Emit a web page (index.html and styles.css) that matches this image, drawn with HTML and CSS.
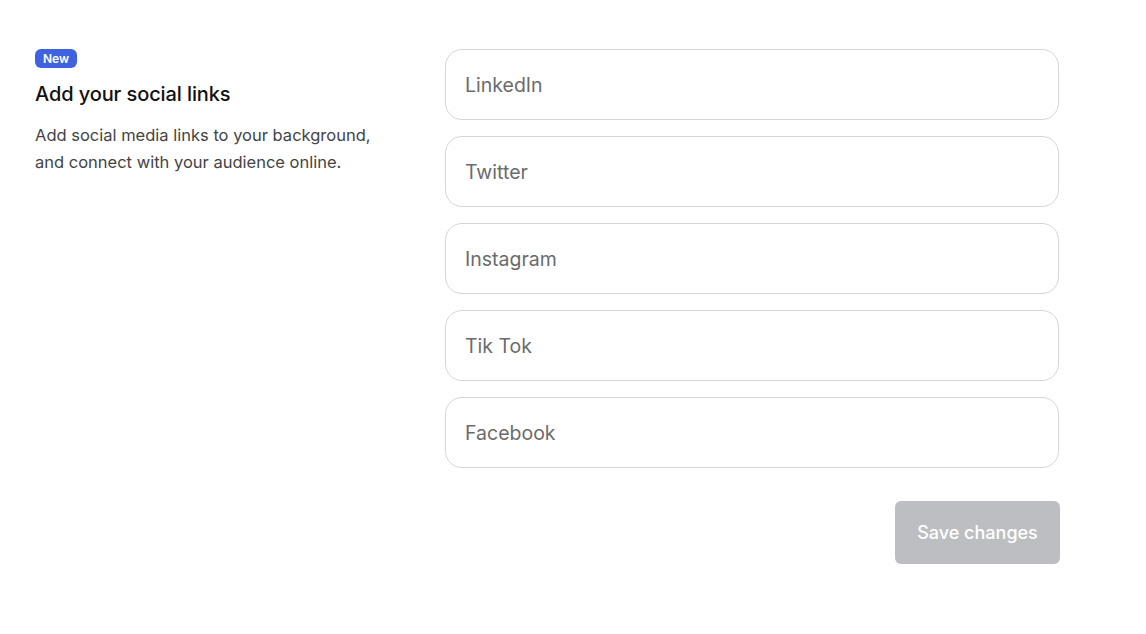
FILE: index.html
```html
<!DOCTYPE html>
<html lang="en">
<head>
    <meta charset="UTF-8">
    <meta name="viewport" content="width=device-width, initial-scale=1.0">
    <title>Social links</title>
    <link rel="stylesheet" href="styles.css">
</head>
<body>
    <div class="page">
        <div class="intro">
            <span class="badge">New</span>
            <h2>Add your social links</h2>
            <p>Add social media links to your background, and connect with your audience online.</p>
        </div>
        <form class="links">
            <input type="text" class="field" placeholder="LinkedIn">
            <input type="text" class="field" placeholder="Twitter">
            <input type="text" class="field" placeholder="Instagram">
            <input type="text" class="field" placeholder="Tik Tok">
            <input type="text" class="field" placeholder="Facebook">
            <div class="actions">
                <button type="button" class="save" disabled>Save changes</button>
            </div>
        </form>
    </div>
</body>
</html>
```

FILE: styles.css
```css
body {
    margin: 0;
    font-family: Inter, 'Noto Sans', sans-serif;
    background-color: #fff;
    color: #111;
}
.page {
    display: flex;
    padding: 49px 0 0 35px;
}
.intro {
    width: 360px;
    margin-right: 50px;
}
.badge {
    display: block;
    width: fit-content;
    background-color: #3f63e0;
    color: #fff;
    font-size: 12px;
    font-weight: 600;
    line-height: 19px;
    padding: 0 8px;
    border-radius: 6px;
}
h2 {
    font-size: 20px;
    font-weight: 500;
    line-height: 26px;
    margin: 13px 0 15px;
    letter-spacing: -0.1px;
}
p {
    font-size: 16.5px;
    line-height: 27px;
    color: #444;
    margin: 0;
    max-width: 352px;
}
.links {
    display: flex;
    flex-direction: column;
    gap: 16px;
    width: 615px;
}
.field {
    box-sizing: border-box;
    height: 71px;
    width: 614px;
    border: 1px solid #d6d6d6;
    border-radius: 17px;
    padding: 0 19px;
    font-family: inherit;
    font-size: 19.5px;
    color: #333;
    outline: none;
}
.field::placeholder {
    color: #6b6b6b;
}
.actions {
    display: flex;
    justify-content: flex-end;
    margin-top: 17px;
}
.save {
    width: 165px;
    height: 63px;
    border: none;
    border-radius: 6px;
    background-color: #bdbec2;
    color: #fff;
    font-family: inherit;
    font-size: 18px;
    font-weight: 500;
}
```
